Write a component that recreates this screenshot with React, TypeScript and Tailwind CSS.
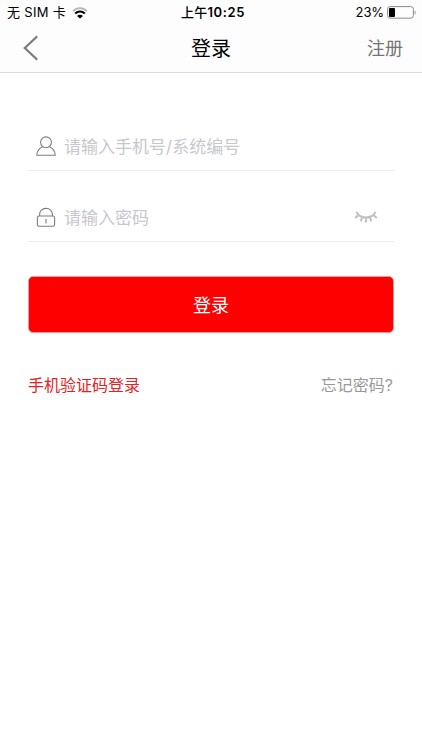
import React, { useState } from 'react';

function WifiIcon() {
  return (
    <svg className="w-4 h-3" viewBox="0 0 16 12" fill="none">
      <path d="M1 4.2C5 .1 11 .1 15 4.2" stroke="#b5b5b5" strokeWidth="1.9" />
      <path d="M3.2 6.5C6 3.9 10 3.9 12.8 6.5" stroke="#000" strokeWidth="2.2" />
      <path d="M8 11.6L5 8.9C6.7 7.3 9.3 7.3 11 8.9Z" fill="#000" />
    </svg>
  );
}

function BatteryIcon() {
  return (
    <svg className="w-[29px] h-[13px]" viewBox="0 0 29 13" fill="none">
      <rect x="0.6" y="0.6" width="25.8" height="11.6" rx="2.6" stroke="#8c8c8c" />
      <rect x="2" y="2" width="6" height="9" rx="1" fill="#000" />
      <path d="M27.6 4.4C29 5 29 8 27.6 8.6Z" fill="#8c8c8c" />
    </svg>
  );
}

function UserIcon() {
  return (
    <svg className="w-5 h-5" viewBox="0 0 20 20" fill="none" stroke="#7d7d7d" strokeWidth="1.1">
      <circle cx="10" cy="6.3" r="5.4" />
      <path d="M6.6 10.7C3.4 12.1 1 15 .7 19.2H19.3C19 15 16.6 12.1 13.4 10.7" strokeLinejoin="round" />
    </svg>
  );
}

function LockIcon() {
  return (
    <svg className="w-5 h-5" viewBox="0 0 20 20" fill="none" stroke="#7d7d7d" strokeWidth="1.1">
      <rect x="1.4" y="9" width="17.2" height="10.3" rx="1.8" />
      <path d="M3.6 9V7.6C3.6 4 6.2 1.4 10 1.4S16.4 4 16.4 7.6V9M10 12V16.6" />
    </svg>
  );
}

function ClosedEyeIcon() {
  return (
    <svg className="w-6 h-3" viewBox="0 0 24 12" fill="none" stroke="#c0c0c0" strokeWidth="2">
      <path d="M2.4 1C6.4 8.2 17.6 8.2 21.6 1M4.5 4L1.2 7M8.1 6L6.8 10.4M12 6.6V11.4M15.9 6L17.2 10.4M19.5 4L22.8 7" />
    </svg>
  );
}

export default function App() {
  const [account, setAccount] = useState('');
  const [password, setPassword] = useState('');
  const [visible, setVisible] = useState(false);

  return (
    <div className="h-[750px] w-[422px] overflow-hidden bg-white font-['Inter','Noto_Sans_CJK_SC',sans-serif]">
      <header className="h-[73px] border-b border-[#dcdcdc] bg-[#fdfdfd]">
        <div className="grid h-6 grid-cols-3 items-center pl-[7px] pr-[6px] text-[13px] text-black">
          <div className="flex items-center gap-[6px] pt-px">
            <span className="tracking-[0.3px]">无 SIM 卡</span>
            <WifiIcon />
          </div>
          <div className="pt-px pl-[3px] text-center font-semibold tracking-[0.6px]">
            <span className="font-medium tracking-[0.2px]">上午</span>10:25
          </div>
          <div className="flex items-center justify-end gap-[3px]">
            <span className="pt-px tracking-[-0.1px]">23%</span>
            <BatteryIcon />
          </div>
        </div>
        <div className="grid h-12 grid-cols-[1fr_auto_1fr] items-center pl-[19px] pr-[19px]">
          <button className="ml-1 w-4" aria-label="返回">
            <svg className="h-[26px] w-4" viewBox="0 0 16 26" fill="none" stroke="#7d7d7d" strokeWidth="2.2">
              <path d="M14.2 1.4L1.8 13L14.2 24.6" />
            </svg>
          </button>
          <h1 className="pt-px text-center text-xl text-black">登录</h1>
          <button className="pt-px text-right text-lg text-[#747474]">注册</button>
        </div>
      </header>

      <main className="px-7 pt-12">
        <div className="flex h-[50px] items-center border-b border-[#ededed] pl-2">
          <UserIcon />
          <input
            className="ml-2 min-w-0 flex-1 pt-1 text-[17px] text-black outline-none placeholder:text-[#c7c7cd]"
            placeholder="请输入手机号/系统编号"
            value={account}
            onChange={e => setAccount(e.target.value)}
          />
        </div>
        <div className="mt-5 flex h-[51px] items-center border-b border-[#ededed] pl-2 pr-4 pt-0.5">
          <LockIcon />
          <input
            className="ml-2 min-w-0 flex-1 pt-1 text-[17px] text-black outline-none placeholder:text-[#c7c7cd]"
            type={visible ? 'text' : 'password'}
            placeholder="请输入密码"
            value={password}
            onChange={e => setPassword(e.target.value)}
          />
          <button onClick={() => setVisible(!visible)} aria-label="显示密码">
            <ClosedEyeIcon />
          </button>
        </div>
        <button className="mt-[34px] h-[57px] w-full rounded-[5px] border border-[#f49a9a] bg-[#fe0000] pt-0.5 text-lg text-white">
          登录
        </button>
        <div className="mt-10 flex items-center justify-between pr-px text-base">
          <button className="text-[#e8201f]">手机验证码登录</button>
          <button className="text-[#999]">忘记密码?</button>
        </div>
      </main>
    </div>
  );
}
